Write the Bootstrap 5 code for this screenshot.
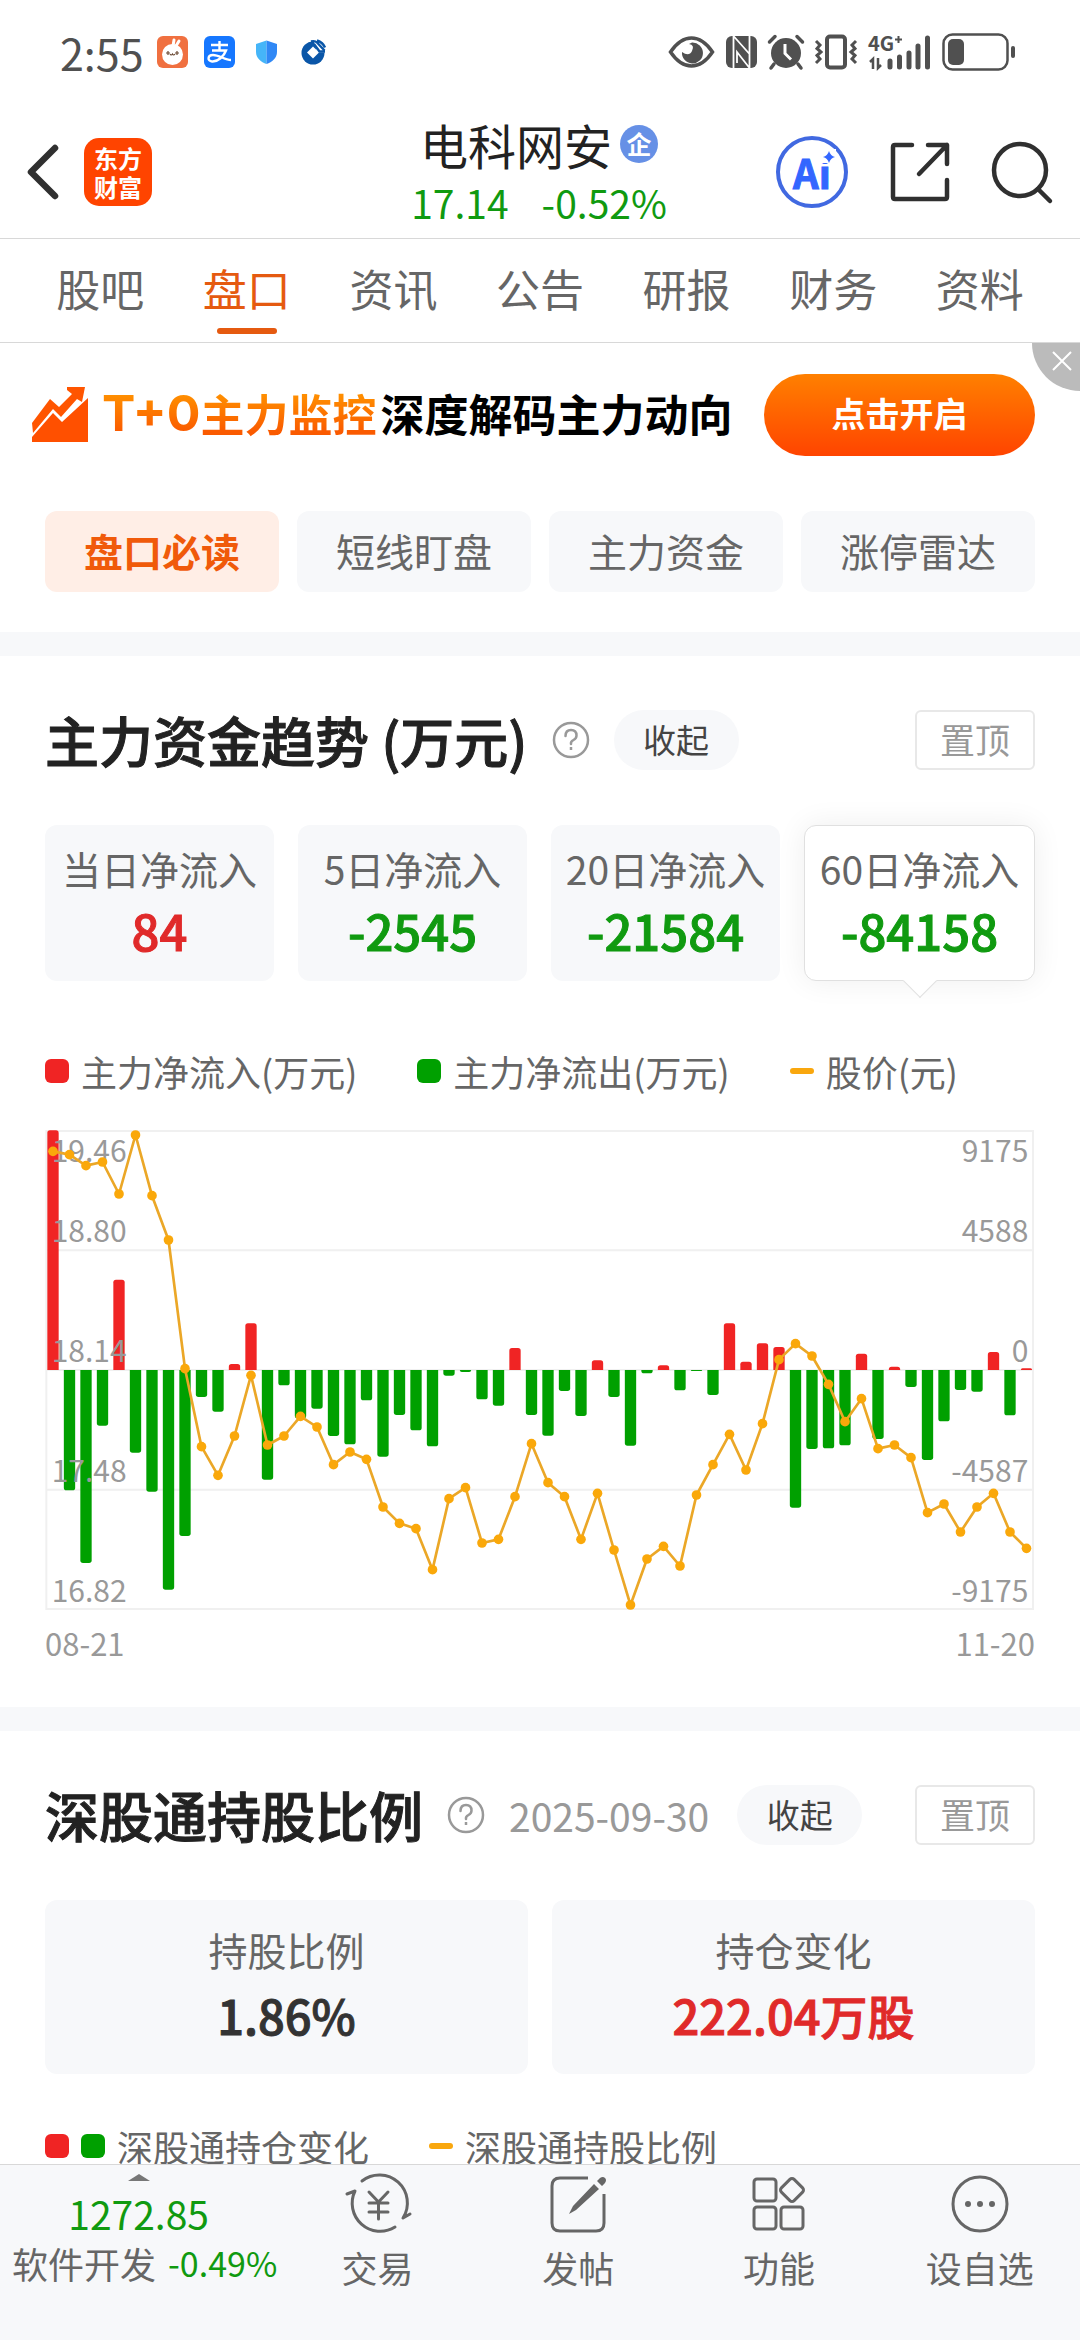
<!DOCTYPE html>
<html lang="zh-CN">
<head>
<meta charset="utf-8">
<meta name="viewport" content="width=device-width, initial-scale=1">
<title>电科网安 - 盘口</title>
<link href="https://cdn.jsdelivr.net/npm/bootstrap@5.3.0/dist/css/bootstrap.min.css" rel="stylesheet">
<style>
:root{--up:#f02424;--down:#00a000;--brand:#e55a10;--soft:#f7f8fa;--ink:#222;--mid:#666;--dim:#999;--line:#d8d8d8}
body{font-family:"Noto Sans CJK SC","Noto Sans",sans-serif;font-size:36px;line-height:48px;color:var(--mid);background:#fff}
svg{display:block;flex:none;overflow:visible}
a{color:inherit;text-decoration:none}
button{color:inherit}
.c-up{color:#e02a2a}.c-down{color:#109a10}
.side{flex:1 1 0}
.statusbar{height:106px;padding:0 64px 2px 60px;color:#505050}
.clock{font-size:43px;line-height:56px;margin-right:13px}
.statusbar .apps{gap:16px}
.statusbar .signals{gap:11px}
.topbar{height:133px;padding:0 28px 0 26px;border-bottom:1px solid var(--line)}
.applogo{width:68px;height:68px;border-radius:15px;background:#ff4400;color:#fff;font-weight:700;font-size:24px;line-height:29px}
.stockname{font-size:48px;line-height:60px;color:var(--ink);font-weight:400;margin:0}
.corp{width:38px;height:38px;border-radius:50%;background:#6690e6;color:#fff;font-size:25px;line-height:36px;font-weight:700}
.quote{font-size:39px;line-height:56px;gap:33px}
.iconbtn{border:0;background:none;padding:0}
.share{margin:0 42px}
.ai{width:72px;height:72px;border:4px solid #4169e1;border-radius:50%;color:#3366ff;font:700 40px/60px "Noto Sans CJK SC",sans-serif;-webkit-text-stroke:1px currentColor;position:relative}
.tabs{height:104px;padding:0 27px;border-bottom:1px solid var(--line);font-size:44px;line-height:60px}
.tabs a{position:relative;height:103px;padding-top:19px}
.tabs a.on{color:var(--brand)}
.tabs a.on::after{content:"";position:absolute;left:50%;bottom:8px;width:60px;height:6px;margin-left:-30px;border-radius:3px;background:var(--brand)}
.scroller{min-height:0;overflow-y:auto;scrollbar-width:none}
.scroller::-webkit-scrollbar{display:none}
.promo{height:144px;padding:0 45px 0 30px;position:relative}
.promo-text{font-size:44px;line-height:64px;font-weight:700;color:#000;gap:4px;margin-left:12px;padding-bottom:4px}
.promo-hot{background:linear-gradient(#ff9000 20%,#fa5a00 80%);-webkit-background-clip:text;background-clip:text;color:transparent}
.promo-hot span{font-family:Inter,sans-serif;font-size:50px}
.promo-go{width:271px;height:82px;border:0;border-radius:41px;background:linear-gradient(#ff8000,#ff4400);color:#fff;font-size:34px;font-weight:700;padding:0 0 4px}
.promo-x{position:absolute;right:0;top:0;width:48px;height:48px;border:0;padding:8px 0 0 20px;border-bottom-left-radius:48px;background:#bbb}
.chips{padding:24px 45px 40px;gap:18px}
.chip{flex:1 1 0;height:81px;border:0;border-radius:12px;background:var(--soft);font-size:39px;padding:0 0 4px}
.chip.on{background:#ffeee6;color:#f05a0a;font-weight:700}
.band{height:24px;background:var(--soft)}
.panel{padding:54px 45px 0}
.panel-head{height:60px}
.panel-head h2{font-size:54px;line-height:60px;font-weight:500;color:var(--ink);margin:0;-webkit-text-stroke:1px currentColor}
.asof{font-size:39px;color:var(--dim);margin-right:28px}
.fold{width:125px;height:60px;border:0;border-radius:30px;background:var(--soft);color:#444;font-size:33px;padding:0 0 2px}
.pin{width:120px;height:60px;border:2px solid #e8e8e8;border-radius:6px;background:#fff;color:var(--dim);font-size:35px;padding:0 0 2px}
.tiles{margin-top:55px;gap:24px}
.tile{flex:1 1 0;min-width:0;border:0;border-radius:12px;background:var(--soft);height:156px;padding:0 0 6px;font-size:39px;line-height:60px;position:relative}
.tile strong{display:block;font-size:49px;line-height:64px;font-weight:500;-webkit-text-stroke:1px currentColor}
.tile.on{background:#fff;border:1px solid #e0e0e0;box-shadow:0 0 30px rgba(0,0,0,.07)}
.tile.on::after{content:"";position:absolute;left:50%;bottom:-13px;width:24px;height:24px;margin-left:-12px;transform:rotate(45deg);background:#fff;border:solid #e0e0e0;border-width:0 1px 1px 0}
.tile.tall{height:174px;padding-bottom:4px}
.tile.tall strong{font-size:47px;line-height:72px}
.legend-row{gap:60px;white-space:nowrap}
.legend-row span{display:flex;align-items:center;gap:12px}
.legend-row i{width:24px;height:24px;border-radius:6px}
.legend-row i.ln{height:6px;border-radius:3px;background:#f9a70e}
.l1{margin-top:66px}.l2{margin-top:48px}
.chart{width:100%;height:auto;margin-top:35px}
.chart text{font-size:90px;fill:var(--dim)}
.dates{font-size:31px;line-height:40px;color:var(--dim);padding:13px 0 44px}
.dock{height:176px;background:var(--soft);border-top:1px solid var(--line)}
.dock-index{flex:0 0 275px;padding-top:9px;white-space:nowrap}
.dock-index .val{font-size:39px;line-height:56px;margin-top:4px}
.dock-index .chg{font-size:34px;line-height:44px;gap:12px;padding-left:12px}
.dock-index .chg b{font-size:36px;font-weight:400}
.dock-item{flex:1 1 0;padding-top:9px}
.dock-item svg{margin:0 auto 9px}
</style>
</head>
<body class="vh-100 d-flex flex-column overflow-hidden">

<div class="statusbar d-flex align-items-center justify-content-between flex-shrink-0">
  <div class="d-flex align-items-center">
    <span class="clock">2:55</span>
    <div class="apps d-flex align-items-center">
      <svg width="31" height="32" viewBox="0 0 31 32"><rect width="31" height="32" rx="6" fill="#f07040"/><circle cx="15.500" cy="18.500" r="10.500" fill="#fff"/><path d="M16 10l1-6M19 10l3-5" stroke="#fff" stroke-width="3" stroke-linecap="round"/><path d="M9 17h4M11 15v4M18 17h4M20 15v4M13 18q1 2 2.500 0q1 2 2.500 0" stroke="#6b4a35" stroke-width="1.200" fill="none"/></svg>
      <svg width="31" height="32" viewBox="0 0 31 32"><rect width="31" height="32" rx="6" fill="#1677ff"/><g fill="none" stroke="#fff" stroke-width="2.400"><path d="M7 9h17M15.500 5v9M8 14.500h14C20 20 14 26 8 25.500C3 25 3.500 19 9 19C15 19 21 24 27 24"/></g></svg>
      <svg width="31" height="32" viewBox="0 0 31 32"><path d="M15.500 4.500L5 8v8c0 6 5 10 10.500 12z" fill="#45b5f8"/><path d="M15.500 4.500L26 8v8c0 6-5 10-10.500 12z" fill="#3088f5"/></svg>
      <svg width="31" height="32" viewBox="0 0 31 32"><circle cx="15" cy="17" r="11.500" fill="#0a56a8"/><path d="M15 10.500l6 6-6 6-6-6z" fill="#fff"/><path d="M19 16.500h10v-6l-5-5-8 0" fill="#fff"/><path d="M13 5.500q4-1 6 1l7.500 8M19 4.500q6 2 8 7M16 8l5.500 7.500H27" stroke="#0a56a8" stroke-width="2.400" fill="none"/></svg>
    </div>
  </div>
  <div class="signals d-flex align-items-center">
    <svg width="47" height="36" viewBox="0 0 47 36"><path d="M2.500 18Q12 4 23.500 4T44.500 18Q35 32 23.500 32T2.500 18z" fill="none" stroke="#505050" stroke-width="3.500"/><path d="M24 8.500a10.500 10.500 0 1 1-10 9.500q7 5 10-1t-3-7z" fill="#505050"/></svg>
    <svg width="31" height="36" viewBox="0 0 31 36"><rect y="2" width="31" height="32" rx="6" fill="#505050"/><path d="M7.500 34V2l16 18V9M23.500 2v32L11 18v11" fill="none" stroke="#fff" stroke-width="1.800"/></svg>
    <svg width="36" height="36" viewBox="0 0 36 36"><circle cx="18" cy="19" r="15" fill="#505050"/><path d="M1.500 8L7 2.500M34.500 8L29 2.500M6 30l-3 4M30 30l3 4" stroke="#505050" stroke-width="3.500" stroke-linecap="round"/><path d="M17 10v9.500l6 6" stroke="#fff" stroke-width="3" fill="none"/></svg>
    <svg width="42" height="36" viewBox="0 0 42 36" fill="none" stroke="#505050" stroke-width="3"><rect x="12" y="2.500" width="18" height="31" rx="3" stroke-width="4"/><path d="M1 7l4 4-3 3.500 4 3.500-4 3.500 3 3.500-4 4M41 7l-4 4 3 3.500-4 3.500 4 3.500-3 3.500 4 4"/></svg>
    <svg width="63" height="36" viewBox="0 0 63 36"><text x="0" y="17" font-size="20" font-weight="700" fill="#505050">4G</text><path d="M27 5.500h7M30.500 2v7" stroke="#505050" stroke-width="2"/><path d="M2 28l3-3v10M10 24v10l3-3" stroke="#505050" stroke-width="2.500" fill="none"/><path d="M22 27v6M31.500 23v10M41 19v14M50 12v21M59.500 4v29" stroke="#505050" stroke-width="5" stroke-linecap="round"/></svg>
    <svg width="74" height="38" viewBox="0 0 74 38"><rect x="1.500" y="1.500" width="64" height="35" rx="9" fill="none" stroke="#505050" stroke-width="2.500"/><rect x="6" y="6" width="16" height="26" rx="5" fill="#505050"/><rect x="69" y="13" width="4" height="12" rx="2" fill="#505050"/></svg>
  </div>
</div>

<header class="topbar d-flex align-items-center flex-shrink-0">
  <div class="side d-flex align-items-center">
    <button class="iconbtn" aria-label="返回"><svg width="34" height="56" viewBox="0 0 34 56"><path d="M29 4L5 28l24 24" fill="none" stroke="#303030" stroke-width="6.500" stroke-linecap="round" stroke-linejoin="round"/></svg></button>
    <a href="#" class="applogo d-flex flex-column justify-content-center text-center ms-4"><span>东方</span><span>财富</span></a>
  </div>
  <div class="text-center">
    <div class="d-flex align-items-center justify-content-center gap-2"><h1 class="stockname">电科网安</h1><span class="corp">企</span></div>
    <div class="quote d-flex justify-content-center c-down"><span>17.14</span><span>-0.52%</span></div>
  </div>
  <div class="side d-flex align-items-center justify-content-end">
    <button class="iconbtn ai" aria-label="Ai 助手">Ai<svg class="position-absolute top-0 end-0" width="24" height="30" viewBox="0 0 24 30"><rect x="0" y="9" width="16" height="14" fill="#fff"/><path d="M9 11q1.500 5 6 6q-4.500 1-6 6q-1.500-5-6-6q4.500-1 6-6z" fill="#36f"/></svg></button>
    <button class="iconbtn share" aria-label="分享"><svg width="60" height="60" viewBox="0 0 60 60" fill="none" stroke="#303030" stroke-width="4.500" stroke-linecap="round" stroke-linejoin="round"><path d="M22 3H5Q3 3 3 5v50q0 2 2 2h50q2 0 2-2V38M38 3h19v19M57 3L29 32"/></svg></button>
    <button class="iconbtn" aria-label="搜索"><svg width="60" height="62" viewBox="0 0 60 62" fill="none" stroke="#303030" stroke-width="4.500" stroke-linecap="round"><circle cx="28" cy="29" r="26"/><path d="M46 48l12 12"/></svg></button>
  </div>
</header>

<nav class="tabs d-flex flex-shrink-0 text-center">
  <a class="flex-fill" href="#">股吧</a><a class="flex-fill on" href="#" aria-current="page">盘口</a><a class="flex-fill" href="#">资讯</a><a class="flex-fill" href="#">公告</a><a class="flex-fill" href="#">研报</a><a class="flex-fill" href="#">财务</a><a class="flex-fill" href="#">资料</a>
</nav>

<main class="scroller flex-grow-1">
  <section class="promo d-flex align-items-center justify-content-between">
    <div class="d-flex align-items-center">
      <svg width="60" height="58" viewBox="0 0 60 58"><path d="M2 37L20 13l9 8L42 8l-5-4V1h18l-3 15-5-3L31 31l-8-8L3 47z" fill="#ff5500"/><path d="M2 56V51L23 27l9 9L58 12v44z" fill="#ff5000"/></svg>
      <div class="promo-text d-flex align-items-center"><span class="promo-hot d-flex align-items-center"><span>T+0</span>主力监控</span><span>深度解码主力动向</span></div>
    </div>
    <button class="promo-go">点击开启</button>
    <button class="promo-x d-flex align-items-start" aria-label="关闭"><svg width="20" height="20" viewBox="0 0 20 20"><path d="M1 1l18 18M19 1L1 19" stroke="#fff" stroke-width="2"/></svg></button>
  </section>

  <div class="chips d-flex">
    <button class="chip on">盘口必读</button><button class="chip">短线盯盘</button><button class="chip">主力资金</button><button class="chip">涨停雷达</button>
  </div>
  <div class="band"></div>

  <section class="panel">
    <div class="panel-head d-flex align-items-center">
      <h2>主力资金趋势 (万元)</h2>
      <button class="iconbtn ms-4 me-4" aria-label="说明"><svg width="38" height="38" viewBox="0 0 38 38" fill="none" stroke="#999" stroke-width="2.500"><circle cx="19" cy="19" r="17"/><path d="M13.500 15q0-6 5.500-6t5.500 5.500q0 3-3 4.500t-2.500 4" stroke-linecap="round"/><path d="M19 26v3"/></svg></button>
      <button class="fold">收起</button>
      <button class="pin ms-auto">置顶</button>
    </div>
    <div class="tiles d-flex">
      <button class="tile">当日净流入<strong class="c-up">84</strong></button>
      <button class="tile">5日净流入<strong class="c-down">-2545</strong></button>
      <button class="tile">20日净流入<strong class="c-down">-21584</strong></button>
      <button class="tile on">60日净流入<strong class="c-down">-84158</strong></button>
    </div>
    <div class="legend-row l1 d-flex">
      <span><i style="background:var(--up)"></i>主力净流入(万元)</span>
      <span><i style="background:var(--down)"></i>主力净流出(万元)</span>
      <span><i class="ln"></i>股价(元)</span>
    </div>
    <svg class="chart" id="flow" viewBox="0 0 2970 1440" role="img" aria-label="主力资金趋势">
      <path d="M4 3H2964V1437H4zM4 361H2964M4 720H2964M4 1079H2964" fill="none" stroke="#f0f0f0" stroke-width="6"/>
      <g id="bars"></g>
      <g><text x="20" y="97">19.46</text><text x="20" y="337">18.80</text><text x="20" y="697">18.14</text><text x="20" y="1057">17.48</text><text x="20" y="1417">16.82</text></g>
      <g text-anchor="end"><text x="2950" y="97">9175</text><text x="2950" y="337">4588</text><text x="2950" y="697">0</text><text x="2950" y="1057">-4587</text><text x="2950" y="1417">-9175</text></g>
      <g id="price" fill="#faa80a"></g>
    </svg>
    <div class="dates d-flex justify-content-between"><span>08-21</span><span>11-20</span></div>
  </section>
  <div class="band"></div>

  <section class="panel">
    <div class="panel-head d-flex align-items-center">
      <h2>深股通持股比例</h2>
      <button class="iconbtn ms-4 me-4" aria-label="说明"><svg width="38" height="38" viewBox="0 0 38 38" fill="none" stroke="#999" stroke-width="2.500"><circle cx="19" cy="19" r="17"/><path d="M13.500 15q0-6 5.500-6t5.500 5.500q0 3-3 4.500t-2.500 4" stroke-linecap="round"/><path d="M19 26v3"/></svg></button>
      <span class="asof">2025-09-30</span>
      <button class="fold">收起</button>
      <button class="pin ms-auto">置顶</button>
    </div>
    <div class="tiles d-flex">
      <button class="tile tall">持股比例<strong style="color:#333">1.86%</strong></button>
      <button class="tile tall">持仓变化<strong class="c-up">222.04万股</strong></button>
    </div>
    <div class="legend-row l2 d-flex">
      <span><i style="background:var(--up)"></i><i style="background:var(--down)"></i>深股通持仓变化</span>
      <span><i class="ln"></i>深股通持股比例</span>
    </div>
  </section>
</main>

<nav class="dock d-flex flex-shrink-0 text-center">
  <a href="#" class="dock-index d-flex flex-column align-items-center">
    <svg width="22" height="7" viewBox="0 0 22 7"><path d="M0 7L11 0l11 7z" fill="#777"/></svg>
    <span class="val c-down">1272.85</span>
    <span class="chg d-flex align-items-center"><b>软件开发</b><span class="c-down">-0.49%</span></span>
  </a>
  <a href="#" class="dock-item"><svg width="66" height="60" viewBox="0 0 66 60" fill="none" stroke="#666" stroke-width="3" stroke-linecap="round" stroke-linejoin="round"><path d="M17 7A28 28 0 0 1 58 44L65 40M50 53A28 28 0 0 1 10 17L2 20"/><path d="M24 18l9.500 10L43 18M33.500 28v17M24 29h19M24 38h19"/></svg>交易</a>
  <a href="#" class="dock-item"><svg width="58" height="60" viewBox="0 0 58 60"><path d="M39 4H11Q3 4 3 12v37q0 8 8 8h36q8 0 8-8V20" fill="none" stroke="#666" stroke-width="3"/><path d="M45 10l5 5L27 36l-7 4 4-8zM48 7l3-3q3-2 5 0t0 5l-3 3z" fill="#666"/></svg>发帖</a>
  <a href="#" class="dock-item"><svg width="56" height="60" viewBox="0 0 56 60" fill="none" stroke="#666" stroke-width="3"><rect x="3" y="5" width="22" height="22" rx="3"/><rect x="3" y="33" width="22" height="22" rx="3"/><rect x="30" y="33" width="22" height="22" rx="3"/><rect x="32" y="7" width="18" height="18" rx="3" transform="rotate(45 41 16)"/></svg>功能</a>
  <a href="#" class="dock-item"><svg width="60" height="60" viewBox="0 0 60 60"><circle cx="30" cy="30" r="27" fill="none" stroke="#666" stroke-width="3"/><g fill="#666"><circle cx="18" cy="30" r="3"/><circle cx="30" cy="30" r="3"/><circle cx="42" cy="30" r="3"/></g></svg>设自选</a>
</nav>

<script src="https://cdn.jsdelivr.net/npm/bootstrap@5.3.0/dist/js/bootstrap.bundle.min.js"></script>
<script>
// net flow per day: signed bar length; 671 is the full half-height of the plot
const flow=[671,-337,-540,-156,253,-231,-341,-615,-465,-76,-117,17,131,-307,-43,-135,-108,-185,-208,-85,-243,-126,-169,-214,-16,-6,-82,-100,62,-126,-184,-59,-129,27,-76,-212,-9,13,-57,-3,-70,131,23,75,64,-385,-221,-219,-211,46,-193,9,-48,-252,-144,-56,-61,50,-127,5];
// closing price: distance below the top edge, on the same scale
const price=[60,69,100,90,179,14,184,308,668,887,967,857,687,882,857,802,832,937,902,922,1056,1101,1116,1231,1032,1001,1156,1146,1027,878,987,1027,1146,1017,1176,1330,1201,1166,1221,1022,937,852,952,822,643,598,633,712,817,752,892,882,917,1071,1047,1126,1056,1017,1126,1171];
const k=720/672, x=i=>24+i*49.5, y=v=>Math.round(v*k), zero=720;
document.getElementById('bars').innerHTML=flow.map((v,i)=>{
  const h=y(Math.abs(v)),r=Math.min(8,h),s=v>0?-1:1,l=x(i)-17,e=zero+s*h;
  return `<path d="M${l} ${zero}V${e-s*r}Q${l} ${e} ${l+r} ${e}H${l+34-r}Q${l+34} ${e} ${l+34} ${e-s*r}V${zero}z" fill="${v>0?'#f02424':'#00a000'}"/>`}).join('');
document.getElementById('price').innerHTML=`<polyline points="${price.map((v,i)=>x(i)+','+y(v)).join(' ')}" fill="none" stroke="#eba727" stroke-width="8" stroke-linejoin="round"/>`+price.map((v,i)=>`<circle cx="${x(i)}" cy="${y(v)}" r="14.500"/>`).join('');
</script>
</body>
</html>
